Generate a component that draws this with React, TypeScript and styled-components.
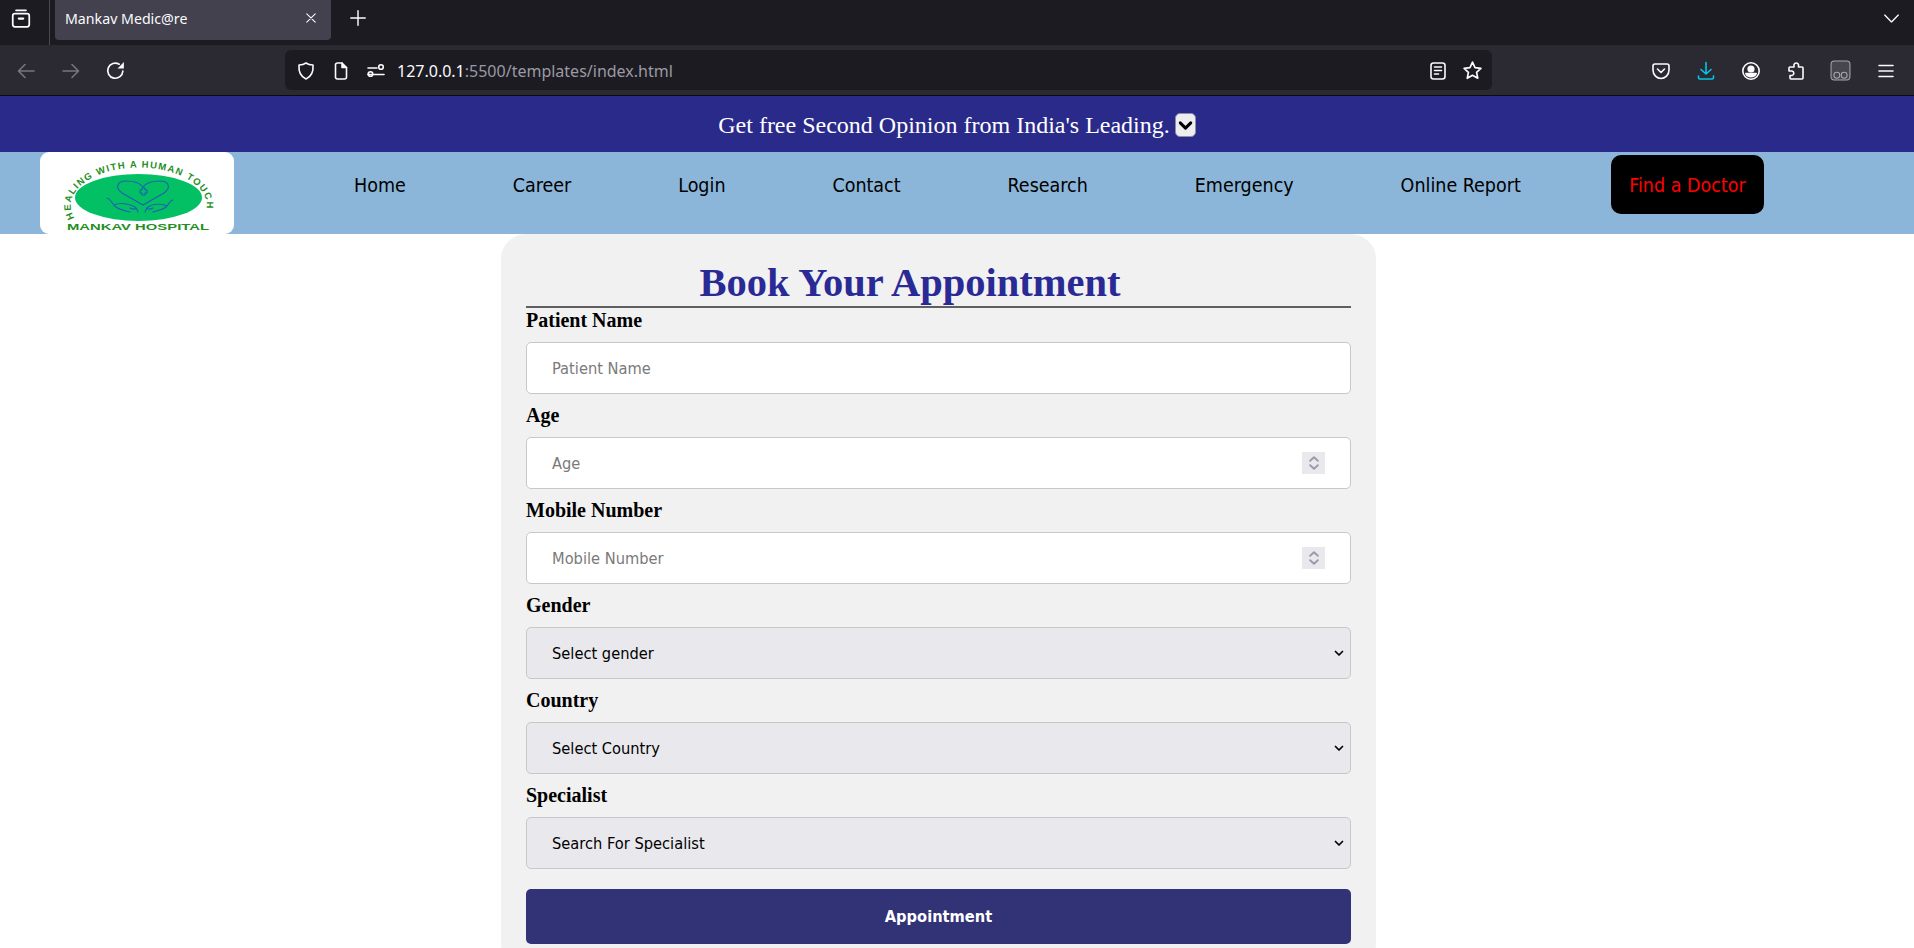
import { ReactElement, ReactNode } from 'react';
import styled, { createGlobalStyle } from 'styled-components';

//
// Styles
//

const GlobalStyle = createGlobalStyle`
  html, body {
    margin: 0;
    height: 100%;
    overflow: hidden;
    background: #fff;
  }

  * {
    box-sizing: border-box;
  }
`;

const UI_FONT = '"Noto Sans", "Open Sans", sans-serif';
const PAGE_FONT = '"DejaVu Sans Condensed", "DejaVu Sans", sans-serif';
const SERIF_FONT = '"Liberation Serif", "Times New Roman", serif';

const Page = styled.div`
  height: 948px;
  overflow: hidden;
`;

const TabStrip = styled.div`
  height: 45px;
  background: #1c1b22;
  display: flex;
  align-items: flex-start;
  color: #fbfbfe;
  font-family: ${UI_FONT};
`;

const ViewButton = styled.div`
  width: 42px;
  height: 40px;
  display: flex;
  align-items: center;
  justify-content: center;
  padding-bottom: 4px;
`;

const Divider = styled.div`
  width: 1px;
  height: 45px;
  background: #4a4950;
  margin: 0 5px 0 7px;
`;

const Tab = styled.div`
  width: 276px;
  height: 40px;
  background: #42414d;
  border-radius: 0 0 4px 4px;
  display: flex;
  align-items: center;
  justify-content: space-between;
  padding: 0 13px 4px 10px;
  font-size: 14.2px;
`;

const NewTab = styled.div`
  width: 44px;
  height: 36px;
  margin-left: 5px;
  display: flex;
  align-items: center;
  justify-content: center;
`;

const ListAll = styled.div`
  margin-left: auto;
  width: 46px;
  height: 36px;
  display: flex;
  align-items: center;
  justify-content: center;
`;

const Toolbar = styled.div`
  height: 51px;
  background: #2b2a33;
  border-bottom: 1px solid #0c0c0f;
  display: flex;
  align-items: center;
  padding: 0 6px 0 3px;
  font-family: ${UI_FONT};
`;

const Slot = styled.div<{ $width?: number; $color?: string }>`
  width: ${({ $width }) => $width ?? 45}px;
  height: 40px;
  flex-shrink: 0;
  display: flex;
  align-items: center;
  justify-content: center;
  padding-top: 1px;
  color: ${({ $color }) => $color ?? '#fbfbfe'};
`;

const UrlBar = styled.div`
  width: 1207px;
  height: 40px;
  margin-left: 147px;
  background: #1c1b22;
  border-radius: 6px;
  display: flex;
  align-items: center;
  padding: 0 2px 0 3px;
`;

const UrlText = styled.div`
  margin-left: 4px;
  padding-top: 1px;
  font-size: 16px;
  color: #fbfbfe;
`;

const UrlRest = styled.span`
  color: #9a9aa3;
`;

const RightGroup = styled.div`
  margin-left: auto;
  display: flex;
  align-items: center;
`;

const Icon = styled.svg.attrs({
  viewBox: '0 0 20 20',
  fill: 'none',
  stroke: 'currentColor',
})<{ $size?: number; $weight?: number }>`
  width: ${({ $size }) => $size ?? 20}px;
  height: ${({ $size }) => $size ?? 20}px;
  stroke-width: ${({ $weight }) => $weight ?? 1.6};
  stroke-linecap: round;
  stroke-linejoin: round;
  display: block;
`;

const Banner = styled.div`
  height: 56px;
  padding-top: 2px;
  background: #2a2a8b;
  display: flex;
  align-items: center;
  justify-content: center;
  gap: 5px;
  color: #fff;
  font-family: ${SERIF_FONT};
  font-size: 24px;
`;

const BannerToggle = styled.div`
  width: 21px;
  height: 24px;
  background: #eeeef0;
  border: 1px solid #8f8fa8;
  border-radius: 5px;
  color: #000;
  display: flex;
  align-items: center;
  justify-content: center;
`;

const Nav = styled.nav`
  height: 82px;
  background: #8bb6da;
  display: flex;
  align-items: flex-start;
  padding-left: 40px;
  font-family: ${PAGE_FONT};
`;

const LogoBox = styled.div`
  width: 194px;
  height: 82px;
  background: #fff;
  border-radius: 9px;
  overflow: hidden;
  flex-shrink: 0;
`;

const NavList = styled.div`
  margin: 3px 0 0 120px;
  height: 59px;
  display: flex;
  align-items: center;
  gap: 106.9px;
`;

const NavLink = styled.a`
  padding-top: 2px;
  color: #000;
  font-size: 19.5px;
  text-decoration: none;
  white-space: nowrap;
`;

const DoctorLink = styled(NavLink)`
  height: 59px;
  margin-left: -16.9px;
  padding: 2px 18.5px 0;
  display: flex;
  align-items: center;
  background: #000;
  border-radius: 10px;
  color: #f00;
`;

const Card = styled.form`
  width: 875px;
  margin: 0 auto 0 501px;
  padding: 0 25px 25px;
  background: #f1f1f1;
  border-radius: 25px;
`;

const Heading = styled.h1`
  margin: 0 0 2px;
  padding: 26px 57px 0 0;
  height: 74px;
  border-bottom: 2px solid #5f5f5f;
  color: #2a2a96;
  font-family: ${SERIF_FONT};
  font-size: 40.5px;
  font-weight: 700;
  line-height: 46px;
  text-align: center;
`;

const Field = styled.div`
  margin-bottom: 11px;
`;

const Label = styled.label`
  display: block;
  height: 22px;
  margin-bottom: 10px;
  color: #000;
  font-family: ${SERIF_FONT};
  font-size: 20px;
  font-weight: 700;
  line-height: 20px;
`;

const ControlWrap = styled.div`
  position: relative;
  height: 52px;
`;

const TextInput = styled.input`
  width: 100%;
  height: 52px;
  padding: 0 25px;
  background: #fff;
  border: 1px solid #c8c8c8;
  border-radius: 5px;
  outline: none;
  color: #000;
  font-family: ${PAGE_FONT};
  font-size: 16.3px;
  appearance: textfield;

  &::placeholder {
    color: #7a7a7a;
    opacity: 1;
  }

  &::-webkit-outer-spin-button,
  &::-webkit-inner-spin-button {
    appearance: none;
    margin: 0;
  }
`;

const Spinner = styled.div`
  position: absolute;
  top: 15px;
  right: 26px;
  width: 23px;
  height: 22px;
  background: #e9e8ed;
  color: #9d9ca8;
  display: flex;
  align-items: center;
  justify-content: center;
  pointer-events: none;
`;

const Select = styled.select`
  width: 100%;
  height: 52px;
  padding: 0 25px;
  background: #e9e8ed;
  border: 1px solid #c8c8c8;
  border-radius: 5px;
  outline: none;
  color: #000;
  font-family: ${PAGE_FONT};
  font-size: 16.3px;
  appearance: none;
`;

const SelectArrow = styled.div`
  position: absolute;
  top: 21px;
  right: 7px;
  width: 10px;
  height: 10px;
  color: #000;
  pointer-events: none;
`;

const SubmitButton = styled.button`
  display: block;
  width: 100%;
  height: 55px;
  margin-top: 20px;
  background: #323276;
  border: none;
  border-radius: 5px;
  color: #fff;
  font-family: ${PAGE_FONT};
  font-size: 16.3px;
  font-weight: 700;
`;

//
// Icons
//

const Logo = (): ReactElement => (
  <svg viewBox="0 0 194 82" width="194" height="82">
    <defs>
      <path id="logo-arc" d="M34.5 66 A68 38 0 1 1 163 66" />
    </defs>
    <ellipse cx="98.5" cy="45.5" rx="63.5" ry="23.5" fill="#04c064" />
    <text fill="#1f8f1f" fontFamily="Liberation Sans, sans-serif" fontSize="9.5" fontWeight="700" letterSpacing="1.3">
      <textPath href="#logo-arc">HEALING WITH A HUMAN TOUCH</textPath>
    </text>
    <text x="27" y="78" fill="#1f8f1f" fontFamily="Liberation Sans, sans-serif" fontSize="9" fontWeight="700" textLength="142" lengthAdjust="spacingAndGlyphs">MANKAV HOSPITAL</text>
    <g fill="none" stroke="#1c5fb8" strokeWidth="1.1" strokeLinecap="round" strokeLinejoin="round">
      <path d="M103 53 L82 41 C74 35 78 29 86 29 C94 29 100 31 103 35 C106 31 112 29 120 29 C128 29 132 35 124 41 Z" />
      <path d="M100 38 H102 V36 H105 V38 H107 V41 H105 V43 H102 V41 H100 Z" />
      <path d="M67 46 C71 47 72 52 76 55 C80 58 86 59 90 60 M74 53 C80 50 90 52 95 55 C97 57 94 58 90 56 M98 60 C97 58 97 56 95 55" />
      <path d="M133 48 C130 48 129 52 126 55 C122 58 116 59 113 60 M127 54 C122 51 112 52 108 55 C106 57 109 58 113 56 M105 60 C106 58 106 56 108 55" />
    </g>
  </svg>
);

const SelectField = ({ label, placeholder }: { label: string; placeholder: string }): ReactElement => (
  <Field>
    <Label>{label}</Label>
    <ControlWrap>
      <Select defaultValue="">
        <option value="">{placeholder}</option>
      </Select>
      <SelectArrow>
        <Icon $size={10} $weight={3.4}>
          <path d="M3 7 L10 14 L17 7" />
        </Icon>
      </SelectArrow>
    </ControlWrap>
  </Field>
);

const InputField = ({ label, type, children }: { label: string; type: string; children?: ReactNode }): ReactElement => (
  <Field>
    <Label>{label}</Label>
    <ControlWrap>
      <TextInput type={type} placeholder={label} />
      {children}
    </ControlWrap>
  </Field>
);

const NumberSpinner = (): ReactElement => (
  <Spinner>
    <Icon $size={22} $weight={1.8}>
      <path d="M6.5 8 L10 4.8 L13.5 8" />
      <path d="M6.5 12 L10 15.2 L13.5 12" />
    </Icon>
  </Spinner>
);

//
// Component
//

const App = (): ReactElement => (
  <Page>
    <GlobalStyle />

    <TabStrip>
      <ViewButton>
        <Icon $size={22}>
          <path d="M5.5 3 H14.5" />
          <rect x="2.5" y="6" width="15" height="12" rx="2" />
          <path d="M8 10.5 H12" strokeWidth="2" />
        </Icon>
      </ViewButton>
      <Divider />
      <Tab>
        <span>Mankav Medic@re</span>
        <Icon $size={14}>
          <path d="M4 4 L16 16 M16 4 L4 16" />
        </Icon>
      </Tab>
      <NewTab>
        <Icon $size={18}>
          <path d="M10 2 V18 M2 10 H18" />
        </Icon>
      </NewTab>
      <ListAll>
        <Icon $size={17}>
          <path d="M2 6 L10 14 L18 6" />
        </Icon>
      </ListAll>
    </TabStrip>

    <Toolbar>
      <Slot $color="#77767e">
        <Icon>
          <path d="M18 10 H2.5 M9 3.5 L2.5 10 L9 16.5" />
        </Icon>
      </Slot>
      <Slot $color="#77767e">
        <Icon>
          <path d="M2 10 H17.5 M11 3.5 L17.5 10 L11 16.5" />
        </Icon>
      </Slot>
      <Slot>
        <Icon $size={21}>
          <path d="M17 10.5 A7.2 7.2 0 1 1 13.5 4" />
          <path d="M18 2 V8 H12 Z" fill="currentColor" stroke="none" />
        </Icon>
      </Slot>

      <UrlBar>
        <Slot $width={35}>
          <Icon>
            <path d="M10 2 C12 3.5 14.5 4 17 4 C17.5 10 15.5 15.5 10 18 C4.5 15.5 2.5 10 3 4 C5.5 4 8 3.5 10 2 Z" />
          </Icon>
        </Slot>
        <Slot $width={35}>
          <Icon>
            <path d="M4.5 4 A2 2 0 0 1 6.5 2 H11 L15.5 6.5 V16 A2 2 0 0 1 13.5 18 H6.5 A2 2 0 0 1 4.5 16 Z" />
            <path d="M11 2 V6.5 H15.5" fill="currentColor" />
          </Icon>
        </Slot>
        <Slot $width={35}>
          <Icon>
            <path d="M2 7 H11 M2 13.5 H18 M9 13.5 H18" />
            <circle cx="15" cy="6" r="2.3" />
            <circle cx="4.5" cy="13" r="2.3" />
          </Icon>
        </Slot>
        <UrlText>
          127.0.0.1
          <UrlRest>:5500/templates/index.html</UrlRest>
        </UrlText>
        <RightGroup>
          <Slot $width={35}>
            <Icon>
              <rect x="3" y="2" width="14" height="16" rx="2.5" />
              <path d="M6.5 6 H13.5 M6.5 9.5 H13.5 M6.5 13 H10.5" />
            </Icon>
          </Slot>
          <Slot $width={35}>
            <Icon $size={21}>
              <path d="M10 2 L12.4 7.2 L18 7.9 L13.9 11.7 L15 17.4 L10 14.6 L5 17.4 L6.1 11.7 L2 7.9 L7.6 7.2 Z" />
            </Icon>
          </Slot>
        </RightGroup>
      </UrlBar>

      <RightGroup>
        <Slot>
          <Icon>
            <path d="M4 3 H16 A2 2 0 0 1 18 5 V9 C18 14 14 17.5 10 17.5 C6 17.5 2 14 2 9 V5 A2 2 0 0 1 4 3 Z" />
            <path d="M6.5 8 L10 11.5 L13.5 8" />
          </Icon>
        </Slot>
        <Slot $color="#00c8e8">
          <Icon>
            <path d="M10 1.5 V13 M5 8.5 L10 13 L15 8.5" />
            <path d="M2.5 15 V16.5 A1.5 1.5 0 0 0 4 18 H16 A1.5 1.5 0 0 0 17.5 16.5 V15" />
          </Icon>
        </Slot>
        <Slot>
          <Icon>
            <circle cx="10" cy="10" r="8.2" />
            <circle cx="10" cy="8" r="2.8" fill="currentColor" />
            <path d="M4.8 12.5 H15.2 C14.2 15 12 15.8 10 15.8 C8 15.8 5.8 15 4.8 12.5 Z" fill="currentColor" />
          </Icon>
        </Slot>
        <Slot>
          <Icon>
            <path d="M8 3.5 A2.4 2.4 0 0 1 12.5 3.5 V6 H16 A1 1 0 0 1 17 7 V17 A1 1 0 0 1 16 18 H5 A1 1 0 0 1 4 17 V14.5 H6 A2.3 2.3 0 0 0 6 10 H3 V7 A1 1 0 0 1 4 6 H8 Z" />
          </Icon>
        </Slot>
        <Slot $color="#a5a5ab">
          <Icon $size={21} $weight={1}>
            <rect x="1" y="1" width="18" height="18" rx="3" fill="#47464f" />
            <circle cx="6.5" cy="14.5" r="2.8" />
            <circle cx="13.5" cy="14.5" r="2.8" />
          </Icon>
        </Slot>
        <Slot>
          <Icon>
            <path d="M3 4.5 H17 M3 10 H17 M3 15.5 H17" />
          </Icon>
        </Slot>
      </RightGroup>
    </Toolbar>

    <Banner>
      <span>Get free Second Opinion from India's Leading.</span>
      <BannerToggle>
        <Icon $size={15} $weight={4}>
          <path d="M3 6.5 L10 13.5 L17 6.5" />
        </Icon>
      </BannerToggle>
    </Banner>

    <Nav>
      <LogoBox>
        <Logo />
      </LogoBox>
      <NavList>
        <NavLink href="#home">Home</NavLink>
        <NavLink href="#career">Career</NavLink>
        <NavLink href="#login">Login</NavLink>
        <NavLink href="#contact">Contact</NavLink>
        <NavLink href="#research">Research</NavLink>
        <NavLink href="#emergency">Emergency</NavLink>
        <NavLink href="#report">Online Report</NavLink>
        <DoctorLink href="#doctor">Find a Doctor</DoctorLink>
      </NavList>
    </Nav>

    <Card>
      <Heading>Book Your Appointment</Heading>
      <InputField label="Patient Name" type="text" />
      <InputField label="Age" type="number">
        <NumberSpinner />
      </InputField>
      <InputField label="Mobile Number" type="number">
        <NumberSpinner />
      </InputField>
      <SelectField label="Gender" placeholder="Select gender" />
      <SelectField label="Country" placeholder="Select Country" />
      <SelectField label="Specialist" placeholder="Search For Specialist" />
      <SubmitButton type="button">Appointment</SubmitButton>
    </Card>
  </Page>
);

export default App;
